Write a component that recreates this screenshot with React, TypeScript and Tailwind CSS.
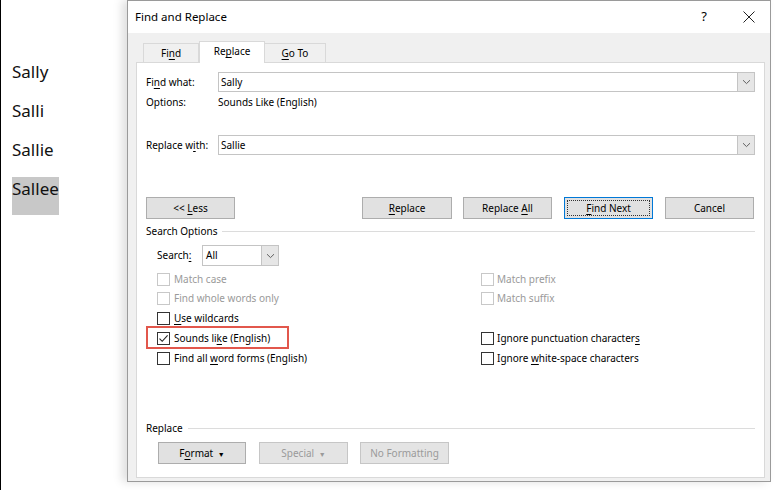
import type { ReactNode } from 'react';

const font = { fontFamily: '"Noto Sans", "Open Sans", sans-serif' };

function U({ children }: { children: ReactNode }) {
  return <span className="underline underline-offset-[2px]">{children}</span>;
}

function Chevron({ color = '#606060' }: { color?: string }) {
  return (
    <svg width="9" height="6" viewBox="0 0 9 6" fill="none">
      <path d="M1 1.2 L4.5 4.6 L8 1.2" stroke={color} strokeWidth="1" />
    </svg>
  );
}

function Btn({
  w,
  children,
  disabled,
  focused,
}: {
  w: string;
  children: ReactNode;
  disabled?: boolean;
  focused?: boolean;
}) {
  return (
    <div
      className={[
        'relative flex h-[22px] shrink-0 items-center justify-center border text-[10px]',
        w,
        disabled ? 'border-[#c6c6c6] bg-[#e4e4e4] text-[#9a9a9a]' : 'bg-[#e1e1e1] text-black',
        focused ? 'border-[#0078d7]' : disabled ? '' : 'border-[#adadad]',
      ].join(' ')}
    >
      {focused && <span className="absolute inset-[2px] border border-dotted border-[#333]" />}
      <span>{children}</span>
    </div>
  );
}

function Combo({ value }: { value: string }) {
  return (
    <div className="flex h-[20px] flex-1 border border-[#c4c4c4] bg-white">
      <div className="flex flex-1 items-center pl-[2px] text-[10px]">{value}</div>
      <div className="flex w-[17px] items-center justify-center border-l border-[#c4c4c4] bg-[#e6e6e6]">
        <Chevron />
      </div>
    </div>
  );
}

function Check({
  label,
  checked,
  disabled,
  gap = 'ml-[4px]',
}: {
  label: ReactNode;
  checked?: boolean;
  disabled?: boolean;
  gap?: string;
}) {
  return (
    <div className="flex items-center">
      <div
        className={
          'flex h-[13px] w-[13px] items-center justify-center border bg-white ' +
          (disabled ? 'border-[#c8c8c8]' : 'border-[#333333]')
        }
      >
        {checked && (
          <svg width="11" height="11" viewBox="0 0 11 11" fill="none">
            <path d="M1.5 5.6 L4.2 8.3 L9.6 2.4" stroke="#222" strokeWidth="1.1" />
          </svg>
        )}
      </div>
      <span className={'text-[10px] ' + gap + (disabled ? ' text-[#9a9a9a]' : ' text-black')}>{label}</span>
    </div>
  );
}

function Section({ title }: { title: string }) {
  return (
    <div className="flex h-[16px] items-center">
      <span className="text-[10px]">{title}</span>
      <div className="ml-[5px] h-px flex-1 bg-[#dcdcdc]" />
    </div>
  );
}

export default function App() {
  return (
    <div className="flex h-[490px] w-[775px] overflow-hidden bg-white text-black" style={font}>
      {/* document behind the dialog */}
      <div className="w-[127px] shrink-0 border-l border-black pl-[11px] pt-[60px] text-[17px] leading-[23px] text-[#111]">
        <div className="h-[39px]">Sally</div>
        <div className="h-[39px]">Salli</div>
        <div className="h-[39px]">Sallie</div>
        <div className="inline-block h-[38px] bg-[#c8c8c8]">Sallee</div>
      </div>

      {/* dialog */}
      <div className="flex h-[482px] w-[644px] shrink-0 flex-col border border-[#9a9a9a] bg-[#f0f0f0] shadow-[-5px_0_9px_rgba(0,0,0,0.13)]">
        <div className="flex h-[32px] shrink-0 items-center bg-white pl-[7px]">
          <span className="text-[11.5px]">Find and Replace</span>
          <span className="ml-auto mr-[36px] text-[13px]">?</span>
          <svg className="mr-[15px]" width="12" height="12" viewBox="0 0 12 12" fill="none">
            <path d="M0.5 0.5 L11.5 11.5 M11.5 0.5 L0.5 11.5" stroke="#222" strokeWidth="1" />
          </svg>
        </div>

        <div className="flex flex-1 flex-col pl-[8px]">
          {/* tabs */}
          <div className="flex h-[29px] items-end pl-[7px] text-[10px]">
            <div className="flex h-[19px] w-[56px] items-center justify-center border border-b-0 border-[#d9d9d9] bg-[#f0f0f0]">
              <span>
                Fi<U>n</U>d
              </span>
            </div>
            <div className="relative z-10 -mb-px flex h-[22px] w-[66px] items-center justify-center border border-b-0 border-[#d9d9d9] bg-white pb-[2px]">
              <span>
                Re<U>p</U>lace
              </span>
            </div>
            <div className="flex h-[19px] w-[61px] items-center justify-center border border-b-0 border-l-0 border-[#d9d9d9] bg-[#f0f0f0]">
              <span>
                <U>G</U>o To
              </span>
            </div>
          </div>

          {/* panel */}
          <div className="flex h-[416px] w-[629px] flex-col border border-[#d9d9d9] bg-white pl-[9px] pr-[9px] text-[10px]">
            <div className="mt-[9px] flex h-[20px] items-center">
              <span className="w-[72px]">
                Fi<U>n</U>d what:
              </span>
              <Combo value="Sally" />
            </div>
            <div className="mt-[2px] flex h-[16px] items-center">
              <span className="w-[72px]">Options:</span>
              <span>Sounds Like (English)</span>
            </div>
            <div className="mt-[25px] flex h-[20px] items-center">
              <span className="w-[72px]">
                Replace w<U>i</U>th:
              </span>
              <Combo value="Sallie" />
            </div>

            <div className="mt-[42px] flex">
              <Btn w="w-[89px]">
                &lt;&lt; <U>L</U>ess
              </Btn>
              <div className="ml-auto mr-[1px] flex">
                <Btn w="w-[90px]">
                  <U>R</U>eplace
                </Btn>
                <div className="w-[11px]" />
                <Btn w="w-[89px]">
                  Replace <U>A</U>ll
                </Btn>
                <div className="w-[12px]" />
                <Btn w="w-[89px]" focused>
                  <U>F</U>ind Next
                </Btn>
                <div className="w-[12px]" />
                <Btn w="w-[89px]">Cancel</Btn>
              </div>
            </div>

            <div className="mt-[4px]">
              <Section title="Search Options" />
            </div>

            <div className="mt-[6px] flex h-[21px] items-center pl-[11px]">
              <span className="w-[45px]">
                Search<U>:</U>
              </span>
              <div className="flex h-[21px] w-[77px] border border-[#c4c4c4] bg-white">
                <div className="flex flex-1 items-center pl-[3px]">All</div>
                <div className="flex w-[17px] items-center justify-center border-l border-[#c4c4c4] bg-[#e6e6e6]">
                  <Chevron />
                </div>
              </div>
            </div>

            <div className="mt-[3px] flex pl-[11px]">
              <div className="flex w-[324px] flex-col">
                <div className="flex h-[20px] items-center">
                  <Check label="Match case" disabled />
                </div>
                <div className="flex h-[19px] items-center">
                  <Check label="Find whole words only" disabled />
                </div>
                <div className="flex h-[20px] items-center">
                  <Check
                    label={
                      <>
                        <U>U</U>se wildcards
                      </>
                    }
                  />
                </div>
                <div className="relative flex h-[20px] items-center">
                  <span className="absolute left-[-11px] top-[-2px] h-[23px] w-[143px] border-2 border-[#e2574c]" />
                  <Check
                    checked
                    label={
                      <>
                        Sounds li<U>k</U>e (English)
                      </>
                    }
                  />
                </div>
                <div className="flex h-[20px] items-center">
                  <Check
                    label={
                      <>
                        Find all <U>w</U>ord forms (English)
                      </>
                    }
                  />
                </div>
              </div>
              <div className="flex flex-col">
                <div className="flex h-[20px] items-center">
                  <Check label="Match prefix" disabled gap="ml-[3px]" />
                </div>
                <div className="flex h-[19px] items-center">
                  <Check label="Match suffix" disabled gap="ml-[3px]" />
                </div>
                <div className="h-[20px]" />
                <div className="flex h-[20px] items-center">
                  <Check
                    gap="ml-[3px]"
                    label={
                      <>
                        Ignore punctuation character<U>s</U>
                      </>
                    }
                  />
                </div>
                <div className="flex h-[20px] items-center">
                  <Check
                    gap="ml-[3px]"
                    label={
                      <>
                        Ignore <U>w</U>hite-space characters
                      </>
                    }
                  />
                </div>
              </div>
            </div>

            <div className="mt-[52px]">
              <Section title="Replace" />
            </div>

            <div className="mt-[6px] flex pl-[12px]">
              <Btn w="w-[88px]">
                F<U>o</U>rmat <span className="ml-[2px] text-[7px]">▼</span>
              </Btn>
              <div className="w-[13px]" />
              <Btn w="w-[89px]" disabled>
                Special <span className="ml-[2px] text-[7px]">▼</span>
              </Btn>
              <div className="w-[12px]" />
              <Btn w="w-[89px]" disabled>
                No Formatting
              </Btn>
            </div>
          </div>
        </div>
      </div>
    </div>
  );
}
